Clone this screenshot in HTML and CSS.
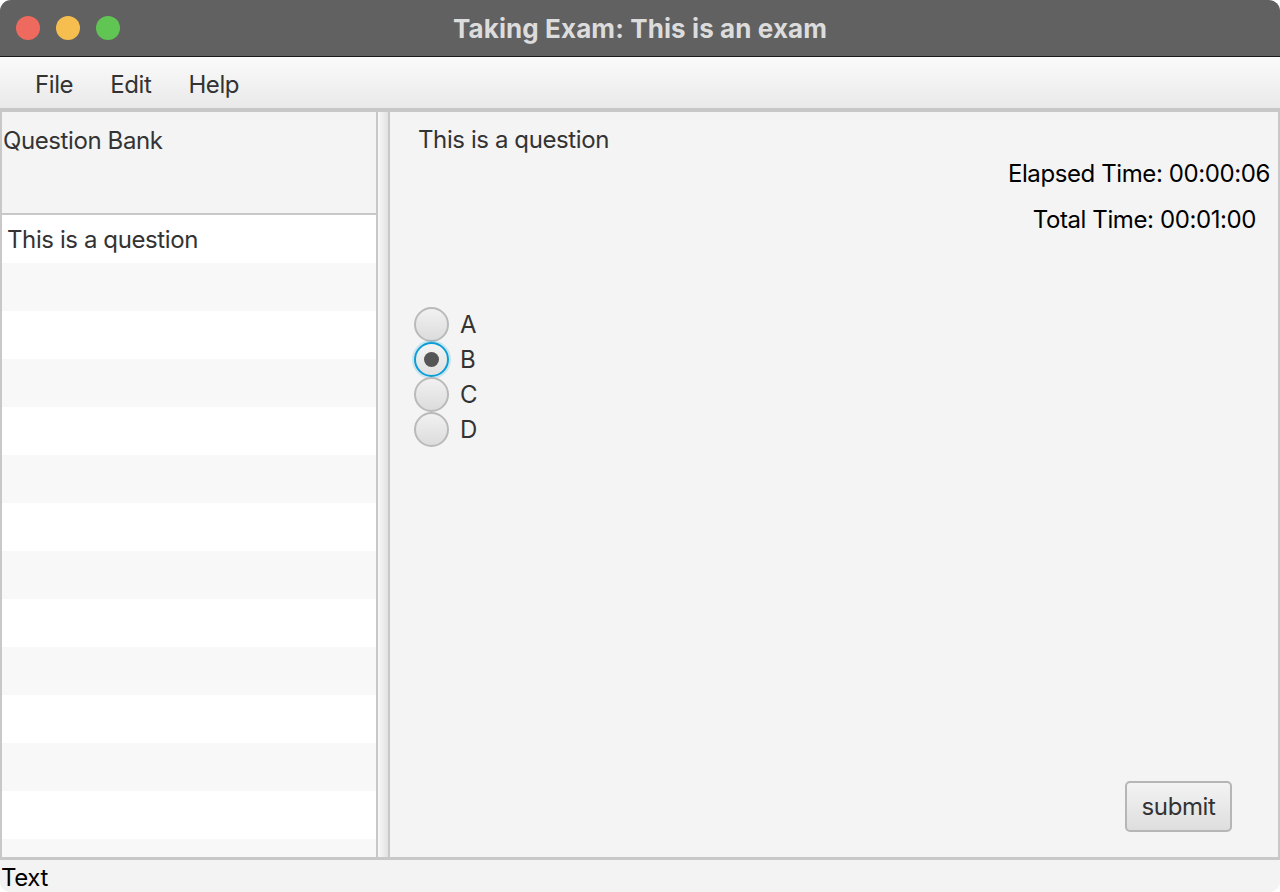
FILE: index.html
```html
<!DOCTYPE html>
<html>
<head>
<meta charset="utf-8">
<link rel="stylesheet" href="styles.css">
</head>
<body>
<div class="window">
  <div class="titlebar">
    <div class="lights">
      <span class="light red"></span>
      <span class="light yellow"></span>
      <span class="light green"></span>
    </div>
    <div class="title">Taking Exam: This is an exam</div>
  </div>
  <div class="menubar">
    <span class="menu">File</span>
    <span class="menu">Edit</span>
    <span class="menu">Help</span>
  </div>
  <div class="split">
    <div class="leftpane">
      <div class="bankhead">Question Bank</div>
      <div class="list">
        <div class="row">This is a question</div>
        <div class="row"></div>
        <div class="row"></div>
        <div class="row"></div>
        <div class="row"></div>
        <div class="row"></div>
        <div class="row"></div>
        <div class="row"></div>
        <div class="row"></div>
        <div class="row"></div>
        <div class="row"></div>
        <div class="row"></div>
        <div class="row"></div>
        <div class="row"></div>
      </div>
    </div>
    <div class="divider"></div>
    <div class="rightpane">
      <div class="question">This is a question</div>
      <div class="times">
        <div class="elapsed">Elapsed Time: 00:00:06</div>
        <div class="total">Total Time: 00:01:00</div>
      </div>
      <div class="options">
        <div class="opt"><span class="radio"></span><span class="lbl">A</span></div>
        <div class="opt"><span class="radio selected"><span class="dot"></span></span><span class="lbl">B</span></div>
        <div class="opt"><span class="radio"></span><span class="lbl">C</span></div>
        <div class="opt"><span class="radio"></span><span class="lbl">D</span></div>
      </div>
      <div class="spacer"></div>
      <div class="actions"><button class="submit">submit</button></div>
    </div>
  </div>
  <div class="status">Text</div>
</div>
</body>
</html>
```
FILE: styles.css
```css
html, body {
  margin: 0;
  padding: 0;
  background: #ffffff;
}
body {
  font-family: Inter, "Noto Sans", "Liberation Sans", sans-serif;
  letter-spacing: -0.4px;
}
.window {
  width: 1280px;
  height: 892px;
  border-radius: 11px;
  overflow: hidden;
  background: #f3f3f3;
  display: flex;
  flex-direction: column;
}
.titlebar {
  height: 56px;
  background: #616161;
  border-bottom: 1px solid #1c1c1c;
  display: flex;
  align-items: center;
  position: relative;
  flex-shrink: 0;
}
.lights {
  display: flex;
  gap: 16px;
  padding-left: 16px;
}
.light {
  width: 24px;
  height: 24px;
  border-radius: 50%;
  display: block;
}
.red { background: #ee6a5f; }
.yellow { background: #f5be4f; }
.green { background: #61c554; }
.title {
  position: absolute;
  left: 0;
  right: 0;
  text-align: center;
  color: #dcdcdc;
  font-weight: 700;
  font-size: 26px;
  letter-spacing: 0.1px;
}
.menubar {
  background: linear-gradient(#fbfbfb, #e9e9e9);
  border-bottom: 2px solid #c6c6c6;
  display: flex;
  align-items: center;
  padding-left: 35px;
  padding-top: 3px;
  box-sizing: content-box;
  height: 48px;
  gap: 37px;
  flex-shrink: 0;
}
.menu {
  font-size: 24px;
  color: #333;
}
.split {
  flex: 0 0 750px;
  display: flex;
  border-top: 2px solid #c8c8c8;
  border-bottom: 3px solid #c8c8c8;
  box-sizing: border-box;
  height: 750px;
}
.leftpane {
  width: 374px;
  border-left: 2px solid #c8c8c8;
  border-right: 2px solid #c8c8c8;
  display: flex;
  flex-direction: column;
  flex-shrink: 0;
  overflow: hidden;
}
.bankhead {
  height: 103px;
  flex-shrink: 0;
  background: #f4f4f4;
  border-bottom: 2px solid #c8c8c8;
  font-size: 24px;
  color: #333;
  padding: 14px 0 0 1px;
  box-sizing: border-box;
}
.list {
  flex: 1;
  overflow: hidden;
}
.row {
  height: 48px;
  background: #ffffff;
  font-size: 24px;
  color: #333;
  line-height: 50px;
  padding-left: 5px;
}
.row:nth-child(even) {
  background: #f8f8f8;
}
.divider {
  width: 10px;
  background: linear-gradient(to right, #f8f8f8, #e2e2e2);
  border-right: 2px solid #c8c8c8;
  flex-shrink: 0;
}
.rightpane {
  flex: 1;
  background: #f4f4f4;
  border-right: 2px solid #c8c8c8;
  display: flex;
  flex-direction: column;
  padding: 13px 0 25px 28px;
}
.question {
  font-size: 24px;
  color: #333;
  line-height: 30px;
}
.times {
  display: flex;
  flex-direction: column;
  align-items: flex-end;
  font-size: 24px;
  color: #000;
  margin-top: 3px;
}
.elapsed {
  line-height: 32px;
  padding-right: 8px;
}
.total {
  line-height: 32px;
  margin-top: 14px;
  padding-right: 22px;
}
.options {
  margin-top: 71px;
  margin-left: -4px;
  display: flex;
  flex-direction: column;
}
.opt {
  display: flex;
  align-items: center;
  height: 35px;
}
.radio {
  width: 31px;
  height: 31px;
  border-radius: 50%;
  border: 2px solid #bababa;
  background: linear-gradient(#f1f1f1, #dcdcdc);
  display: flex;
  align-items: center;
  justify-content: center;
  flex-shrink: 0;
}
.radio.selected {
  border-color: #0a9ed8;
  box-shadow: 0 0 0 2px rgba(10, 158, 216, 0.18);
  background: linear-gradient(#f4f4f4, #e0e0e0);
}
.dot {
  width: 15px;
  height: 15px;
  border-radius: 50%;
  background: #555555;
}
.lbl {
  font-size: 24px;
  color: #333;
  margin-left: 11px;
}
.spacer {
  flex: 1;
}
.actions {
  display: flex;
  justify-content: flex-end;
  padding-right: 46px;
}
.submit {
  width: 107px;
  height: 51px;
  border: 2px solid #b6b6b6;
  border-radius: 5px;
  background: linear-gradient(#f3f3f3, #dedede);
  font-family: Inter, "Noto Sans", "Liberation Sans", sans-serif;
  letter-spacing: -0.4px;
  font-size: 24px;
  color: #333;
  padding: 0;
}
.status {
  flex: 1;
  font-size: 24px;
  color: #000;
  padding-left: 1px;
  line-height: 35px;
  background: #f3f3f3;
}
```
